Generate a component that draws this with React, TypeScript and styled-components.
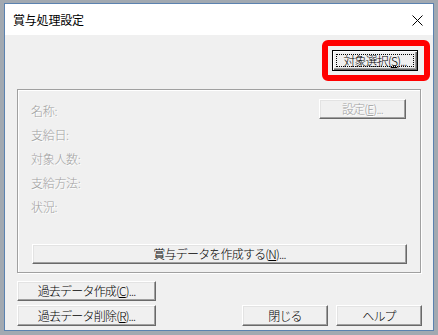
import React from "react";
import styled, { createGlobalStyle, css } from "styled-components";

const Global = createGlobalStyle`
  html, body { margin: 0; padding: 0; background: #a2a9b1; }
  body { font-family: "Noto Sans CJK JP", "Noto Sans", sans-serif; }
`;

const Window = styled.div`
  box-sizing: border-box;
  margin: 3px 0 0 4px;
  width: 430px;
  height: 328px;
  border: 1px solid #5b82b0;
  background: #f0f0f0;
  display: flex;
  flex-direction: column;
`;

const TitleBar = styled.div`
  height: 31px;
  background: #ffffff;
  display: flex;
  align-items: center;
  padding: 0 10px 0 8px;
  font-size: 12px;
  color: #000;
  flex: none;
`;

const Title = styled.div`
  flex: 1;
  letter-spacing: -0.2px;
`;

const CloseIcon = styled.svg`
  width: 11px;
  height: 11px;
  display: block;
  margin-top: 1px;
`;

const Body = styled.div`
  flex: 1;
  display: flex;
  flex-direction: column;
  padding: 5px 0 0 12px;
`;

const TopRow = styled.div`
  display: flex;
  justify-content: flex-end;
  padding-right: 3px;
`;

const Highlight = styled.div`
  box-sizing: border-box;
  width: 108px;
  height: 41px;
  border: 6px solid #ff0000;
  border-radius: 6px;
  display: flex;
  align-items: flex-start;
  padding: 4px 0 0 4px;
`;

const Button = styled.button<{ $w: number; $h?: number; $disabled?: boolean; $default?: boolean }>`
  box-sizing: border-box;
  width: ${(p) => p.$w}px;
  height: ${(p) => p.$h ?? 21}px;
  padding: 0;
  margin: 0;
  background: #f0f0f0;
  font-family: "Noto Sans CJK JP", "Noto Sans", sans-serif;
  font-size: 12px;
  font-weight: 300;
  letter-spacing: -0.8px;
  color: ${(p) => (p.$disabled ? "#a0a0a0" : "#000")};
  text-shadow: ${(p) => (p.$disabled ? "1px 1px 0 #ffffff" : "none")};
  border: 1px solid;
  border-color: #ffffff #696969 #696969 #ffffff;
  box-shadow: inset -1px -1px 0 #a0a0a0, inset 1px 1px 0 #e3e3e3;
  display: flex;
  align-items: center;
  justify-content: center;
  line-height: 1;
  ${(p) =>
    p.$default &&
    css`
      border-color: #000;
      box-shadow: inset 1px 1px 0 #ffffff, inset -1px -1px 0 #696969, inset -2px -2px 0 #a0a0a0;
    `}
`;

const FocusRect = styled.span`
  box-sizing: border-box;
  display: flex;
  align-items: center;
  justify-content: center;
  width: calc(100% - 8px);
  height: calc(100% - 8px);
  outline: 1px dotted #000;
`;

const U = styled.span`
  text-decoration: underline;
  text-underline-offset: 1px;
`;

const GroupBox = styled.div`
  box-sizing: border-box;
  margin-top: 8px;
  width: 404px;
  height: 184px;
  border: 1px solid #a0a0a0;
  box-shadow: inset 1px 1px 0 #ffffff, 1px 1px 0 #ffffff;
  padding: 9px 14px 0 13px;
  display: flex;
  flex-direction: column;
`;

const GroupTop = styled.div`
  display: flex;
  justify-content: space-between;
  align-items: flex-start;
`;

const Labels = styled.div`
  display: flex;
  flex-direction: column;
  margin-top: -1px;
`;

const Label = styled.div`
  height: 24px;
  display: flex;
  align-items: center;
  font-size: 12px;
  font-weight: 300;
  color: #a0a0a0;
  text-shadow: 1px 1px 0 #ffffff;
  letter-spacing: -0.3px;
`;

const WideRow = styled.div`
  margin-top: 26px;
  padding-left: 1px;
`;

const BottomRow = styled.div<{ $gap: number }>`
  display: flex;
  align-items: center;
  margin-top: ${(p) => p.$gap}px;
  padding-right: 11px;
`;

const Spacer = styled.div`
  flex: 1;
`;

const RightButtons = styled.div`
  display: flex;
  gap: 8px;
`;

export default function App() {
  return (
    <>
      <Global />
      <Window>
        <TitleBar>
          <Title>賞与処理設定</Title>
          <CloseIcon viewBox="0 0 11 11">
            <path d="M0.5 0.5 L10.5 10.5 M10.5 0.5 L0.5 10.5" stroke="#000" strokeWidth="1" fill="none" />
          </CloseIcon>
        </TitleBar>
        <Body>
          <TopRow>
            <Highlight>
              <Button $w={86} $default>
                <FocusRect>
                  対象選択(<U>S</U>)...
                </FocusRect>
              </Button>
            </Highlight>
          </TopRow>
          <GroupBox>
            <GroupTop>
              <Labels>
                <Label>名称:</Label>
                <Label>支給日:</Label>
                <Label>対象人数:</Label>
                <Label>支給方法:</Label>
                <Label>状況:</Label>
              </Labels>
              <Button $w={87} $h={20} $disabled>
                設定(<U>E</U>)...
              </Button>
            </GroupTop>
            <WideRow>
              <Button $w={375} $h={20}>
                賞与データを作成する(<U>N</U>)...
              </Button>
            </WideRow>
          </GroupBox>
          <BottomRow $gap={8}>
            <Button $w={139} $h={20}>
              過去データ作成(<U>C</U>)...
            </Button>
          </BottomRow>
          <BottomRow $gap={4}>
            <Button $w={139}>
              過去データ削除(<U>R</U>)...
            </Button>
            <Spacer />
            <RightButtons>
              <Button $w={86}>閉じる</Button>
              <Button $w={86}>ヘルプ</Button>
            </RightButtons>
          </BottomRow>
        </Body>
      </Window>
    </>
  );
}
